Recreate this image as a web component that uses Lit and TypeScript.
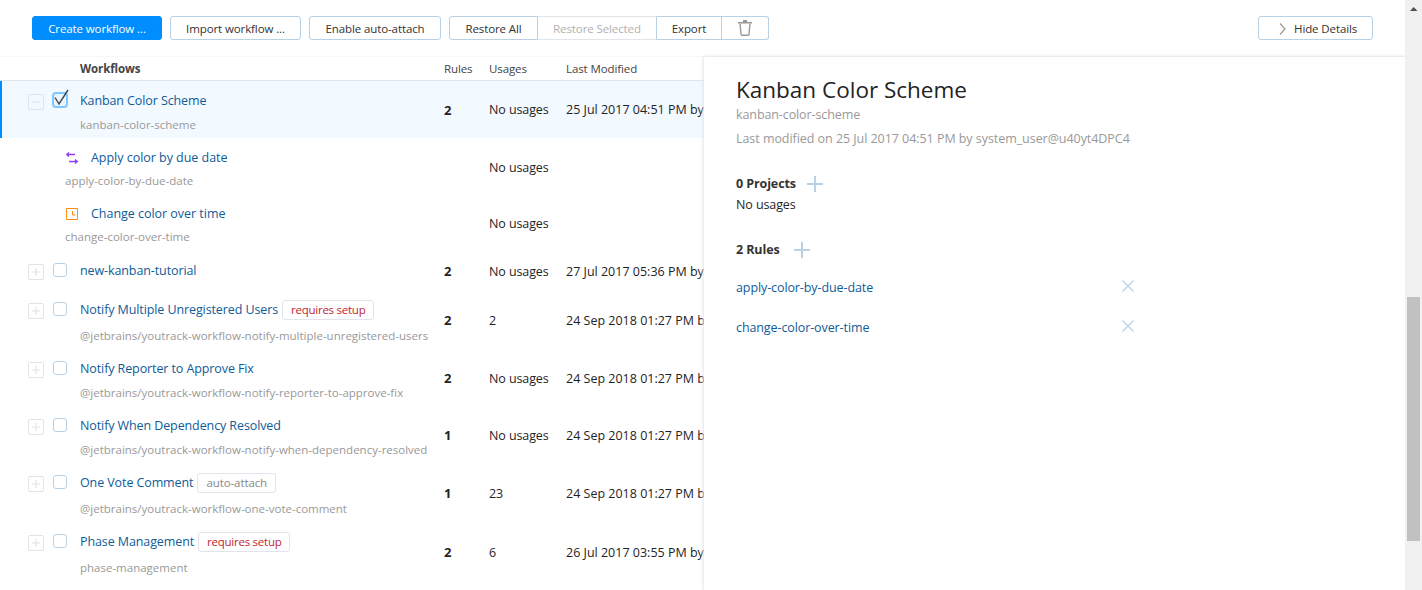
import { LitElement, html, css, svg } from "lit";
import { customElement } from "lit/decorators.js";

type Row = { name: string; id?: string; tag?: string; tagKind?: string; rules: string; usages: string; mod: string; kind: string };

const rows: Row[] = [
  { name: "new-kanban-tutorial", rules: "2", usages: "No usages", mod: "27 Jul 2017 05:36 PM by", kind: "single" },
  { name: "Notify Multiple Unregistered Users", id: "@jetbrains/youtrack-workflow-notify-multiple-unregistered-users", tag: "requires setup", tagKind: "red", rules: "2", usages: "2", mod: "24 Sep 2018 01:27 PM by", kind: "tagged" },
  { name: "Notify Reporter to Approve Fix", id: "@jetbrains/youtrack-workflow-notify-reporter-to-approve-fix", rules: "2", usages: "No usages", mod: "24 Sep 2018 01:27 PM by", kind: "plain" },
  { name: "Notify When Dependency Resolved", id: "@jetbrains/youtrack-workflow-notify-when-dependency-resolved", rules: "1", usages: "No usages", mod: "24 Sep 2018 01:27 PM by", kind: "plain" },
  { name: "One Vote Comment", id: "@jetbrains/youtrack-workflow-one-vote-comment", tag: "auto-attach", tagKind: "grey", rules: "1", usages: "23", mod: "24 Sep 2018 01:27 PM by", kind: "tagged" },
  { name: "Phase Management", id: "phase-management", tag: "requires setup", tagKind: "red", rules: "2", usages: "6", mod: "26 Jul 2017 03:55 PM by", kind: "tagged" },
];

const plus = (s: number) => svg`<svg class="plus" width=${s} height=${s} viewBox="0 0 16 16"><path d="M8 0v16M0 8h16" stroke="#b8d1e5" stroke-width="2" fill="none"/></svg>`;
const cross = svg`<svg width="12" height="12" viewBox="0 0 12 12"><path d="M.5.5l11 11M11.5.5l-11 11" stroke="#b8d1e5" stroke-width="1.3" fill="none"/></svg>`;

@customElement("app-root")
export class AppRoot extends LitElement {
  static styles = css`
    :host { display: flex; width: 1422px; height: 590px; overflow: hidden; background: #fff; font-family: "Open Sans", "Noto Sans", sans-serif; font-size: 12.5px; color: #1f2326; letter-spacing: -0.1px; }
    .page { width: 1405px; flex: none; position: relative; height: 590px; overflow: hidden; }
    .toolbar { display: flex; justify-content: space-between; padding: 16px 32px; box-sizing: border-box; border-bottom: 1px solid #f7f7f7; height: 57px; }
    .left { display: flex; gap: 8px; }
    .btn { height: 24px; box-sizing: border-box; border: 1px solid #b8d1e5; border-radius: 3px; display: flex; align-items: center; justify-content: center; background: #fff; line-height: 20px; padding-top: 1px; white-space: nowrap; font-size: 11.5px; color: #333; }
    .primary { background: #008eff; border-color: #008eff; color: #fff; width: 130px; }
    .w131 { width: 131px; }
    .w132 { width: 132px; }
    .group { display: flex; }
    .group .btn { border-radius: 0; border-left: 0; }
    .group .btn:first-child { border-left: 1px solid #b8d1e5; border-radius: 3px 0 0 3px; width: 89px; }
    .group .btn:last-child { border-radius: 0 3px 3px 0; width: 47px; padding-top: 0; }
    .group .dis { color: #b0b0b0; width: 119px; border-top-color: #dfe5eb; border-bottom-color: #dfe5eb; }
    .group .exp { width: 65px; }
    .hide { width: 115px; gap: 8px; padding-left: 20px; justify-content: flex-start; }
    .hide svg { display: block; }
    .head, .row { display: flex; box-sizing: border-box; }
    .head { height: 24px; border-bottom: 1px solid #dfe5eb; line-height: 24px; color: #444; font-size: 11.5px; }
    .c0 { width: 80px; flex: none; position: relative; margin-top: var(--pt); }
    .c1 { width: 364px; flex: none; min-width: 0; padding-top: calc(var(--pt) + 1px); padding-bottom: var(--pb); }
    .c2 { width: 45px; flex: none; font-weight: 700; color: #1f2326; align-self: center; font-size: 13px; }
    .c3 { width: 77px; flex: none; align-self: center; }
    .c4 { flex: 1; align-self: center; white-space: nowrap; letter-spacing: 0; }
    .head .c0 { margin-top: 0; }
    .head .c1 { font-weight: 700; color: #444; padding: 0; font-size: 11.5px; }
    .head .c2 { font-weight: 400; color: #444; align-self: auto; font-size: 11.5px; }
    .head .c3, .head .c4 { align-self: auto; color: #444; letter-spacing: -0.1px; }
    .row { --pt: 7px; --pb: 5px; }
    .plain .c2, .tagged .c2 { margin-bottom: 4px; }
    .plain .c3, .plain .c4, .tagged .c3, .tagged .c4 { margin-bottom: 2px; }
    .name { height: 20px; line-height: 20px; display: flex; align-items: center; color: #0f5b99; white-space: nowrap; }
    .id { height: 20px; line-height: 20px; color: #999; white-space: nowrap; margin-top: 4px; font-size: 11.5px; letter-spacing: 0; }
    .tagged .id { margin-top: 6px; }
    .single { --pt: 10px; --pb: 11px; }
    .selected { background: #f2f9ff; box-shadow: inset 2px 0 0 #008eff; --pt: 9px; --pb: 3px; }
    .sub { --pt: 9px; --pb: 3px; }
    .sub .c0 { width: 65px; }
    .sub .c1 { width: 379px; }
    .sub .c3 { margin-top: 2px; }
    .sub .name { gap: 13px; letter-spacing: -0.03px; }
    .sub .id { margin-top: 3px; }
    .sub .ic { width: 12px; height: 12px; display: block; flex: none; margin-left: 1px; }
    .tag { height: 20px; box-sizing: border-box; border: 1px solid #dfe5eb; border-radius: 3px; padding: 0 8px; line-height: 18px; font-size: 11.5px; margin-left: 4px; }
    .red { color: #c22731; letter-spacing: -0.25px; }
    .grey { color: #888; }
    .exp-box { position: absolute; left: 28px; top: 4px; width: 16px; height: 16px; box-sizing: border-box; border: 1px solid #dfe5eb; border-radius: 2px; display: block; }
    .exp-box svg { display: block; }
    .cb { position: absolute; left: 53px; top: 3px; width: 14px; height: 14px; box-sizing: border-box; border: 1px solid #b8d1e5; border-radius: 3px; background: #fff; }
    .cb.on { border-color: #80c6ff; background: #e9f5ff; box-shadow: 0 0 0 1px #80c6ff; }
    .cb svg { position: absolute; left: -1px; top: -5px; overflow: visible; }
    .panel { position: absolute; left: 704px; top: 57px; right: 0; bottom: 0; background: #fff; box-shadow: 0 0 3px 1px #dfe5eb; padding: 0 32px; }
    .title { font-size: 22.5px; line-height: 30px; margin-top: 18px; letter-spacing: 0; color: #1f2326; }
    .muted { color: #999; line-height: 20px; }
    .p-mod { margin-top: 4px; letter-spacing: -0.05px; }
    .sec { display: flex; align-items: center; font-weight: 700; color: #333; line-height: 20px; gap: 11px; }
    .sec.a { margin-top: 25px; }
    .sec.b { margin-top: 25px; gap: 14px; }
    .plus { display: block; }
    .nou { line-height: 20px; margin-top: 1px; }
    .rule { display: flex; justify-content: space-between; align-items: center; width: 398px; height: 20px; color: #0f5b99; }
    .rule svg { margin-bottom: 2px; }
    .rule.one { margin-top: 17px; }
    .rule.two { margin-top: 20px; }
    .scroll { width: 17px; flex: none; background: #f1f1f1; display: flex; flex-direction: column; align-items: center; height: 590px; }
    .arrow { height: 17px; width: 17px; flex: none; display: block; }
    .track { flex: 1; display: flex; flex-direction: column; padding-top: 280px; }
    .thumb { width: 13px; height: 244px; background: #c1c1c1; }
  `;

  private ctl(expanded = false, on = false) {
    return html`<span class="exp-box"><svg width="14" height="14" viewBox="0 0 14 14"><path d=${expanded ? "M3 7h8" : "M3 7h8M7 3v8"} stroke="#dfe5eb" stroke-width="1.2" fill="none"/></svg></span>
      <span class="cb ${on ? "on" : ""}">${on ? html`<svg width="16" height="17" viewBox="0 0 16 17"><path d="M2 8.5L6 15L15 1" stroke="#444" stroke-width="1.4" fill="none"/></svg>` : ""}</span>`;
  }

  private renderRow(r: Row) {
    return html`<div class="row ${r.kind}">
      <div class="c0">${this.ctl()}</div>
      <div class="c1">
        <div class="name">${r.name}${r.tag ? html`<span class="tag ${r.tagKind}">${r.tag}</span>` : ""}</div>
        ${r.id ? html`<div class="id">${r.id}</div>` : ""}
      </div>
      <div class="c2">${r.rules}</div>
      <div class="c3">${r.usages}</div>
      <div class="c4">${r.mod}</div>
    </div>`;
  }

  render() {
    return html`<div class="page">
        <div class="toolbar">
          <div class="left">
            <div class="btn primary">Create workflow ...</div>
            <div class="btn w131">Import workflow ...</div>
            <div class="btn w132">Enable auto-attach</div>
            <div class="group">
              <div class="btn">Restore All</div>
              <div class="btn dis">Restore Selected</div>
              <div class="btn exp">Export</div>
              <div class="btn"><svg width="14" height="16" viewBox="0 0 14 16"><path d="M0 2h14v1.6H0zM5 0h4v2H5z" fill="#999"/><path d="M2 3.5l1 10.6q.1 1.1 1.1 1.1h5.8q1 0 1.1-1.1L12 3.5" stroke="#999" stroke-width="1.4" fill="none"/></svg></div>
            </div>
          </div>
          <div class="btn hide"><svg width="7" height="12" viewBox="0 0 7 12"><path d="M1 .5L6 6L1 11.5" stroke="#999" stroke-width="1.2" fill="none"/></svg><span>Hide Details</span></div>
        </div>
        <div class="head">
          <div class="c0"></div><div class="c1">Workflows</div><div class="c2">Rules</div><div class="c3">Usages</div><div class="c4">Last Modified</div>
        </div>
        <div class="row selected">
          <div class="c0">${this.ctl(true, true)}</div>
          <div class="c1"><div class="name">Kanban Color Scheme</div><div class="id">kanban-color-scheme</div></div>
          <div class="c2">2</div><div class="c3">No usages</div><div class="c4">25 Jul 2017 04:51 PM by</div>
        </div>
        <div class="row sub">
          <div class="c0"></div>
          <div class="c1"><div class="name"><svg class="ic" viewBox="0 0 12 12"><path d="M9 2.5H.7M3 .5L.7 2.5l2.3 2M3 9.5h8.3M9 7.5l2.3 2-2.3 2" stroke="#8f3fff" stroke-width="1.3" fill="none"/></svg>Apply color by due date</div><div class="id">apply-color-by-due-date</div></div>
          <div class="c2"></div><div class="c3">No usages</div><div class="c4"></div>
        </div>
        <div class="row sub">
          <div class="c0"></div>
          <div class="c1"><div class="name"><svg class="ic" viewBox="0 0 12 12"><path d="M.5.5h11v11H.5zM6.5 3v4h3" stroke="#f98a1c" stroke-width="1" fill="none"/></svg>Change color over time</div><div class="id">change-color-over-time</div></div>
          <div class="c2"></div><div class="c3">No usages</div><div class="c4"></div>
        </div>
        ${rows.map((r) => this.renderRow(r))}
        <div class="panel">
          <div class="title">Kanban Color Scheme</div>
          <div class="muted">kanban-color-scheme</div>
          <div class="muted p-mod">Last modified on 25 Jul 2017 04:51 PM by system_user@u40yt4DPC4</div>
          <div class="sec a"><span>0 Projects</span>${plus(16)}</div>
          <div class="nou">No usages</div>
          <div class="sec b"><span>2 Rules</span>${plus(16)}</div>
          <div class="rule one"><span>apply-color-by-due-date</span>${cross}</div>
          <div class="rule two"><span>change-color-over-time</span>${cross}</div>
        </div>
      </div>
      <div class="scroll">
        <svg class="arrow" viewBox="0 0 17 17"><path d="M5 11h7.5L8.7 7z" fill="#505050"/></svg>
        <div class="track"><div class="thumb"></div></div>
      </div>`;
  }
}
